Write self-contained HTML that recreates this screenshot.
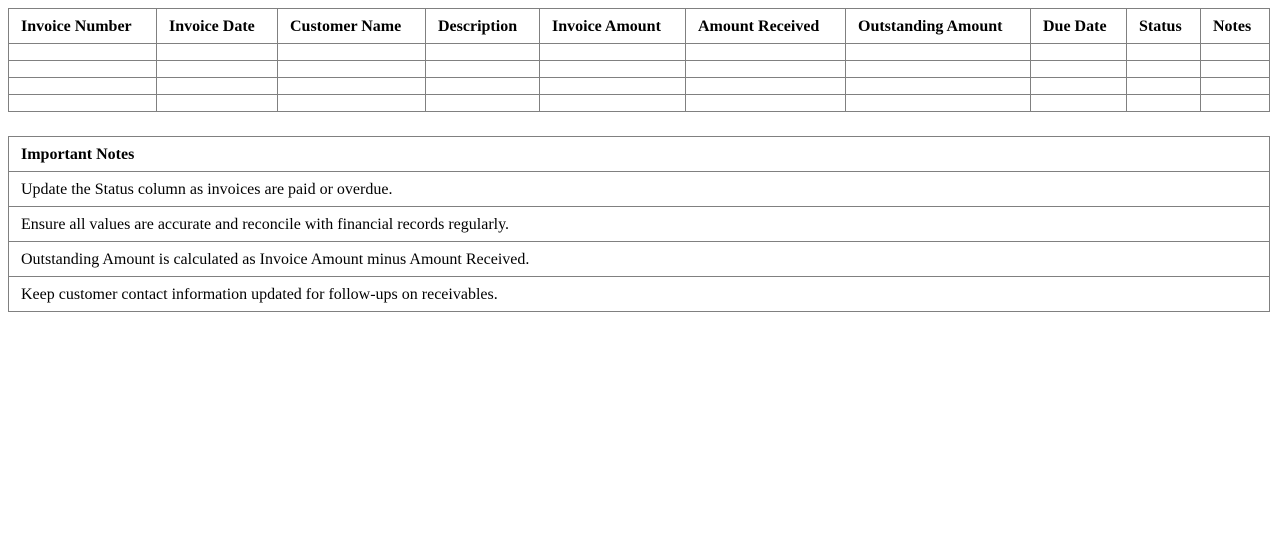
<!DOCTYPE html>
<html><head><meta charset="utf-8"><style>
body{margin:0;background:#fff;font-family:"Liberation Serif",serif;font-size:16px;color:#000}
table{border-collapse:collapse;position:absolute;left:8px;table-layout:fixed}
td,th{border:1px solid #808080;padding:0 12px;text-align:left;white-space:nowrap}
#t1{top:8px;width:1261px}
#t1 th{height:33px;padding-top:1px;font-weight:bold}
#t1 td{height:16px;padding:0}
#t2{top:136px;width:1262px}
#t2 td{height:33px;padding-top:1px}
</style></head><body>
<table id="t1">
<colgroup><col style="width:148px"><col style="width:121px"><col style="width:148px"><col style="width:114px"><col style="width:146px"><col style="width:160px"><col style="width:185px"><col style="width:96px"><col style="width:74px"><col style="width:69px"></colgroup>
<tr><th>Invoice Number</th><th>Invoice Date</th><th>Customer Name</th><th>Description</th><th>Invoice Amount</th><th>Amount Received</th><th>Outstanding Amount</th><th>Due Date</th><th>Status</th><th>Notes</th></tr>
<tr><td></td><td></td><td></td><td></td><td></td><td></td><td></td><td></td><td></td><td></td></tr>
<tr><td></td><td></td><td></td><td></td><td></td><td></td><td></td><td></td><td></td><td></td></tr>
<tr><td></td><td></td><td></td><td></td><td></td><td></td><td></td><td></td><td></td><td></td></tr>
<tr><td></td><td></td><td></td><td></td><td></td><td></td><td></td><td></td><td></td><td></td></tr>
</table>
<table id="t2">
<tr><td><b>Important Notes</b></td></tr>
<tr><td>Update the Status column as invoices are paid or overdue.</td></tr>
<tr><td>Ensure all values are accurate and reconcile with financial records regularly.</td></tr>
<tr><td>Outstanding Amount is calculated as Invoice Amount minus Amount Received.</td></tr>
<tr><td>Keep customer contact information updated for follow-ups on receivables.</td></tr>
</table>
</body></html>
